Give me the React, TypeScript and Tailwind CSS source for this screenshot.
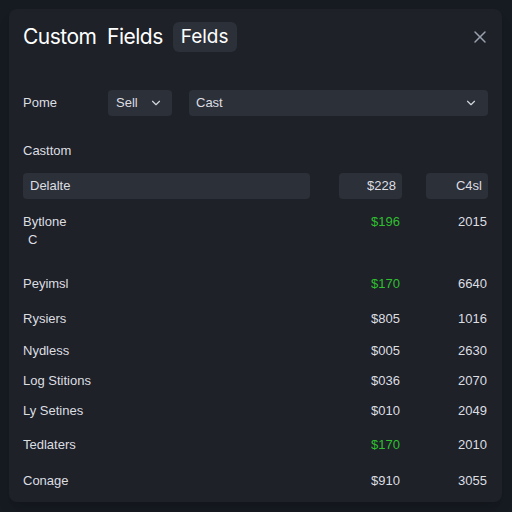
import { ChevronDown, X } from 'lucide-react';

type Row = { name: string; sub?: string; value: string; year: string; green?: boolean; gap: string };

const rows: Row[] = [
  { name: 'Bytlone', sub: 'C', value: '$196', year: '2015', green: true, gap: 'mt-[13px]' },
  { name: 'Peyimsl', value: '$170', year: '6640', green: true, gap: 'mt-[24px]' },
  { name: 'Rysiers', value: '$805', year: '1016', gap: 'mt-[15px]' },
  { name: 'Nydless', value: '$005', year: '2630', gap: 'mt-[12px]' },
  { name: 'Log Stitions', value: '$036', year: '2070', gap: 'mt-[10px]' },
  { name: 'Ly Setines', value: '$010', year: '2049', gap: 'mt-[10px]' },
  { name: 'Tedlaters', value: '$170', year: '2010', green: true, gap: 'mt-[14px]' },
  { name: 'Conage', value: '$910', year: '3055', gap: 'mt-[16px]' },
];

function App() {
  return (
    <div className="min-h-screen bg-[#161a21] pt-[9px] pl-[9px] font-['Liberation_Sans',Arial,sans-serif] text-[#dcdee2]">
      <div className="w-[493px] h-[493px] rounded-lg bg-[#1e2128] px-[14px] pt-[13px] shadow-lg">
        <div className="flex items-center justify-between h-[30px]">
          <div className="flex items-center font-['Inter',sans-serif]">
            <h1 className="text-[21px] tracking-tight text-white">Custom&nbsp; Fields</h1>
            <span className="ml-[10px] h-[30px] px-[8px] flex items-center rounded-md bg-[#2c3038] text-[19px] text-white">
              Felds
            </span>
          </div>
          <X className="w-[20px] h-[20px] text-gray-400 mr-[-2px]" strokeWidth={1.75} />
        </div>

        <div className="mt-[38px] flex items-center h-[26px] text-[13px]">
          <span className="w-[85px]">Pome</span>
          <div className="w-[64px] h-[26px] rounded bg-[#2c3038] flex items-center justify-between pl-[8px] pr-[9px]">
            <span>Sell</span>
            <ChevronDown className="w-[14px] h-[14px] text-gray-300" />
          </div>
          <div className="ml-[17px] flex-1 h-[26px] rounded bg-[#2c3038] flex items-center justify-between pl-[7px] pr-[10px]">
            <span>Cast</span>
            <ChevronDown className="w-[14px] h-[14px] text-gray-300" />
          </div>
        </div>

        <div className="mt-[25px] text-[13px] leading-[20px]">Casttom</div>

        <div className="mt-[12px] flex h-[26px] text-[13px]">
          <div className="w-[287px] rounded bg-[#2c3038] flex items-center pl-[7px]">Delalte</div>
          <div className="ml-[29px] w-[63px] rounded bg-[#2c3038] flex items-center justify-end pr-[6px]">$228</div>
          <div className="ml-[24px] w-[62px] rounded bg-[#2c3038] flex items-center justify-end pr-[6px]">C4sl</div>
        </div>

        {rows.map((r) => (
          <div key={r.name + r.value} className={`${r.gap} flex text-[13px] leading-[20px]`}>
            <div className="w-[287px]">
              <div>{r.name}</div>
              {r.sub && <div className="pl-[5px] mt-[-2px]">{r.sub}</div>}
            </div>
            <div className={`ml-[29px] w-[63px] text-right pr-[2px] ${r.green ? 'text-[#2fbf2f]' : ''}`}>{r.value}</div>
            <div className="ml-[24px] w-[62px] text-right pr-[1px]">{r.year}</div>
          </div>
        ))}
      </div>
    </div>
  );
}

export default App;
